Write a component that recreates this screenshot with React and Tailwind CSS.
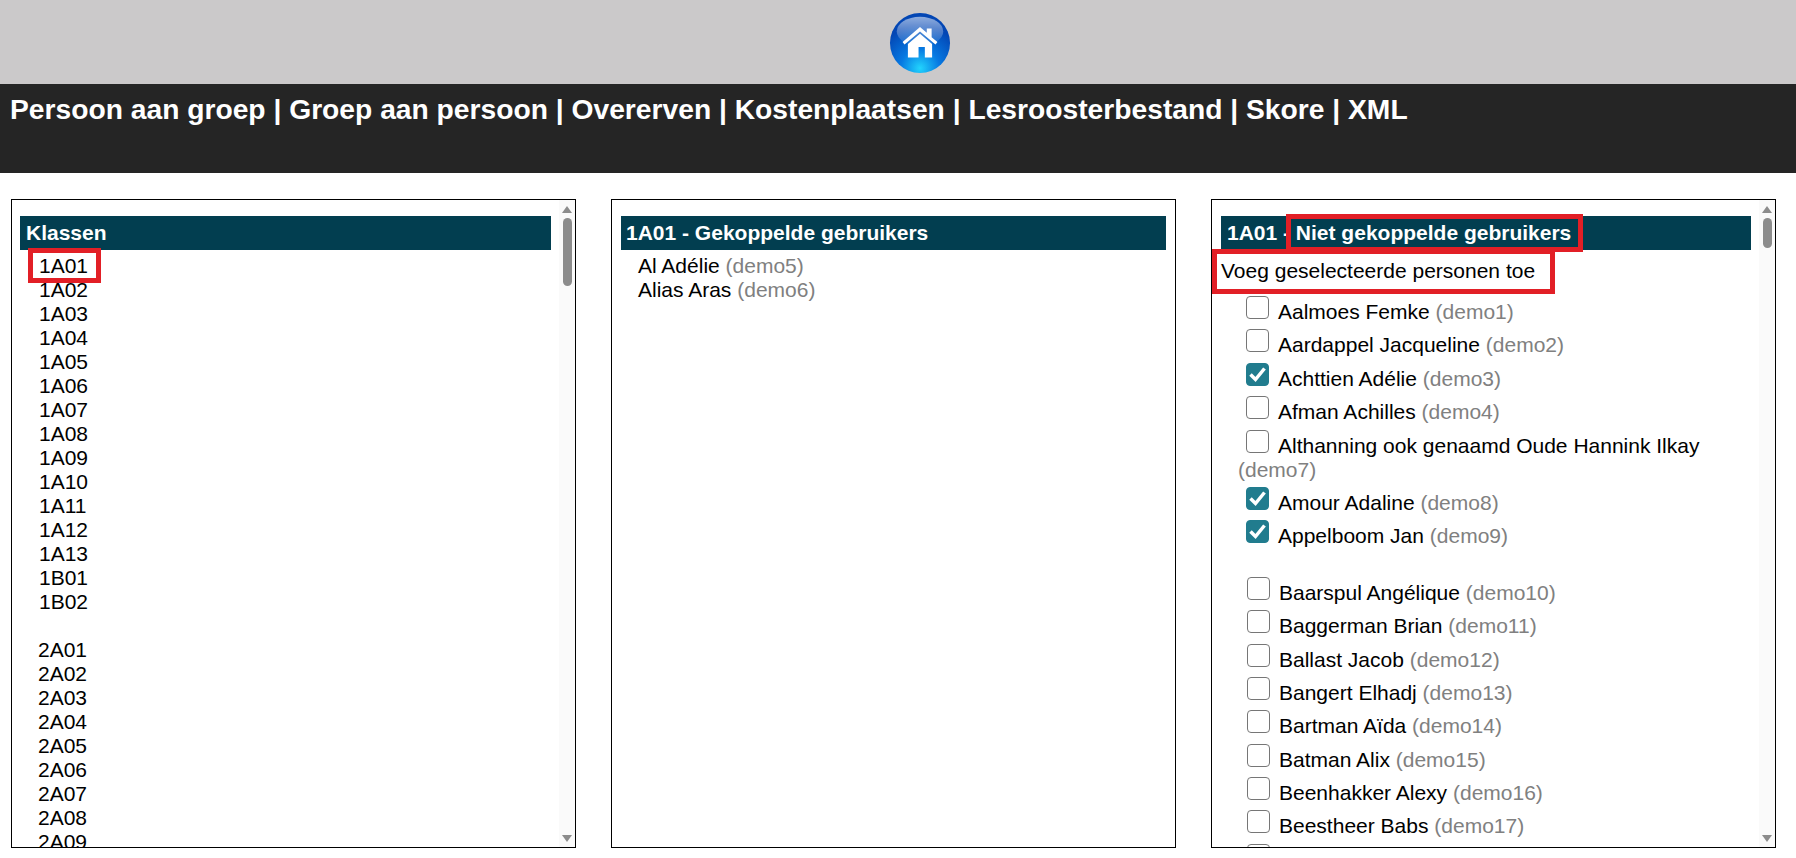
const navItems = ["Persoon aan groep", "Groep aan persoon", "Overerven", "Kostenplaatsen", "Lesroosterbestand", "Skore", "XML"];

const classes1 = ["1A01", "1A02", "1A03", "1A04", "1A05", "1A06", "1A07", "1A08", "1A09", "1A10", "1A11", "1A12", "1A13", "1B01", "1B02"];
const classes2 = ["2A01", "2A02", "2A03", "2A04", "2A05", "2A06", "2A07", "2A08", "2A09"];

const group1 = [
  ["Aalmoes Femke", "demo1"],
  ["Aardappel Jacqueline", "demo2"],
  ["Achttien Adélie", "demo3", true],
  ["Afman Achilles", "demo4"],
  ["Althanning ook genaamd Oude Hannink Ilkay", "demo7"],
  ["Amour Adaline", "demo8", true],
  ["Appelboom Jan", "demo9", true],
];
const group2 = [
  ["Baarspul Angélique", "demo10"],
  ["Baggerman Brian", "demo11"],
  ["Ballast Jacob", "demo12"],
  ["Bangert Elhadj", "demo13"],
  ["Bartman Aïda", "demo14"],
  ["Batman Alix", "demo15"],
  ["Beenhakker Alexy", "demo16"],
  ["Beestheer Babs", "demo17"],
];

const HomeIcon = () => (
  <svg width="62" height="62" viewBox="0 0 64 64">
    <defs>
      <radialGradient id="ball" cx="50%" cy="92%" r="72%">
        <stop offset="0%" stopColor="#22d4fd" />
        <stop offset="45%" stopColor="#0679e2" />
        <stop offset="100%" stopColor="#0346b4" />
      </radialGradient>
      <linearGradient id="gloss" x1="0" y1="0" x2="0" y2="1">
        <stop offset="0%" stopColor="#ffffff" stopOpacity="0.55" />
        <stop offset="100%" stopColor="#ffffff" stopOpacity="0.05" />
      </linearGradient>
    </defs>
    <circle cx="32" cy="32" r="31" fill="url(#ball)" />
    <ellipse cx="32" cy="20" rx="24" ry="15" fill="url(#gloss)" />
    <path d="M14 31 L32 15.5 L39 21.5 V17 H44 V26 L50 31 L48 33.5 L32 20 L16 33.5 Z" fill="#fff" />
    <path d="M19.5 33 L32 22.5 L44.5 33 V47 H37 V36 H30.5 V47 H19.5 Z" fill="#fff" />
  </svg>
);

const RedBox = ({ className }) => (
  <span className={`absolute border-[5px] border-[#e21f26] pointer-events-none ${className}`} />
);

const Scrollbar = ({ thumb }) => (
  <div className="w-[16px] shrink-0 bg-[#fafafa] flex flex-col items-center pt-[6px] pb-[5px]">
    <svg width="10" height="7" viewBox="0 0 10 7"><path d="M5 0 L10 7 H0 Z" fill="#8c8c8c" /></svg>
    <div className={`w-[9px] rounded-full bg-[#8c8c8c] mt-[5px] ${thumb}`} />
    <div className="flex-1" />
    <svg width="10" height="7" viewBox="0 0 10 7"><path d="M0 0 H10 L5 7 Z" fill="#8c8c8c" /></svg>
  </div>
);

const Panel = ({ children, scroll, pad }) => (
  <section className="w-[565px] h-[649px] border border-black flex overflow-hidden">
    <div className={`flex-1 min-w-0 pt-4 overflow-hidden ${pad}`}>{children}</div>
    {scroll}
  </section>
);

const Person = ({ name, user }) => (
  <>
    {name} <span className="text-[#808080]">({user})</span>
  </>
);

const Check = ({ checked }) => (
  <span className="relative inline-block w-[23px] h-[23px] ml-[8px] mr-[9px] align-[0px]">
    <input
      type="checkbox"
      defaultChecked={checked}
      className="appearance-none block w-full h-full rounded-[4px] border-[1.5px] border-[#767676] bg-white checked:bg-[#217c8e] checked:border-[#217c8e]"
    />
    {checked && (
      <svg className="absolute inset-0 pointer-events-none" viewBox="0 0 23 23" fill="none">
        <path d="M4.5 11.5 L9.5 16.5 L18.5 5.5" stroke="#fff" strokeWidth="3.5" />
      </svg>
    )}
  </span>
);

const CheckRow = ({ name, user, checked }) => (
  <li className="pl-[17px] pb-[5.4px] leading-[24px]">
    <Check checked={checked} />
    <Person name={name} user={user} />
  </li>
);

export default function App() {
  return (
    <div className="h-[858px] overflow-hidden bg-white font-['Liberation_Sans',Arial,sans-serif] text-[21px] text-black">
      <header className="h-[84px] bg-[#cbc9ca] flex items-center justify-center pl-[44px] pt-[2px]">
        <HomeIcon />
      </header>

      <nav className="h-[89px] bg-[#252525] px-[10px] pt-[7px] text-white font-bold text-[28.22px] leading-[36px]">
        {navItems.map((item, i) => (
          <span key={item}>
            {i > 0 && " | "}
            {item}
          </span>
        ))}
      </nav>

      <main className="flex gap-[35px] pl-[11px] pt-[26px]">
        <Panel pad="pl-[8px] pr-[8px]" scroll={<Scrollbar thumb="h-[68px]" />}>
          <h2 className="h-[34px] bg-[#023e50] text-white font-bold leading-[34px] px-[6px]">Klassen</h2>
          <ul className="pl-[19px] pt-[4px] leading-[24px]">
            {classes1.map((c) => (
              <li key={c} className="relative">
                {c}
                {c === "1A01" && <RedBox className="-left-[11px] -top-[6px] w-[73px] h-[35px]" />}
              </li>
            ))}
            <li className="h-[24px]" />
            {classes2.map((c) => (
              <li key={c} className="-ml-px">{c}</li>
            ))}
          </ul>
        </Panel>

        <Panel pad="px-[9px]">
          <h2 className="h-[34px] bg-[#023e50] text-white font-bold leading-[34px] px-[5px]">1A01 - Gekoppelde gebruikers</h2>
          <ul className="pl-[17px] pt-[4px] leading-[24px]">
            <li><Person name="Al Adélie" user="demo5" /></li>
            <li><Person name="Alias Aras" user="demo6" /></li>
          </ul>
        </Panel>

        <Panel pad="pl-[9px] pr-[8px]" scroll={<Scrollbar thumb="h-[30px]" />}>
          <h2 className="relative h-[34px] bg-[#023e50] text-white font-bold leading-[34px] px-[6px]">
            1A01 - Niet gekoppelde gebruikers
            <RedBox className="left-[65px] -top-[2px] w-[297px] h-[38px]" />
          </h2>
          <div className="relative h-[42px] leading-[42px]">
            Voeg geselecteerde personen toe
            <RedBox className="-left-[9px] -top-px w-[343px] h-[45px]" />
          </div>
          <ul className="mt-[4px]">
            {group1.map(([name, user, checked]) => (
              <CheckRow key={user} name={name} user={user} checked={checked} />
            ))}
          </ul>
          <ul className="mt-[23px] pl-px">
            {group2.map(([name, user]) => (
              <CheckRow key={user} name={name} user={user} />
            ))}
            <li className="pl-[17px]"><Check /></li>
          </ul>
        </Panel>
      </main>
    </div>
  );
}
